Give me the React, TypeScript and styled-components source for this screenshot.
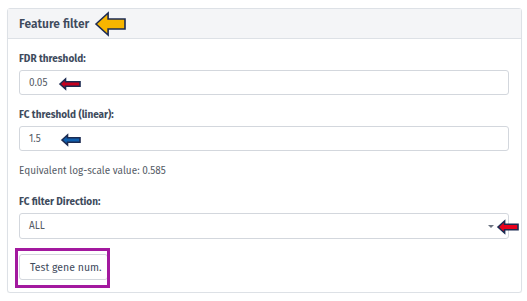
import React from 'react';
import styled, { createGlobalStyle } from 'styled-components';

const GlobalStyle = createGlobalStyle`
  html, body {
    margin: 0;
    padding: 0;
    background: #ffffff;
  }
  body {
    font-family: 'Fira Sans', 'Noto Sans', 'Open Sans', sans-serif;
  }
`;

const Page = styled.div`
  padding: 8px 5px 0 7px;
`;

const Card = styled.div`
  display: flex;
  flex-direction: column;
  background: #fff;
  border: 1px solid #dde1e6;
  border-radius: 3px;
  box-shadow: 0 1px 1px rgba(0, 0, 0, 0.04);
`;

const Header = styled.div`
  position: relative;
  height: 29px;
  display: flex;
  align-items: center;
  gap: 6px;
  padding-left: 11px;
  background: #f4f5f7;
  border-bottom: 1px solid #dde1e6;
  color: #3e4a5c;
  font-size: 12px;
  font-weight: 600;
`;

const Body = styled.div`
  display: flex;
  flex-direction: column;
  align-items: stretch;
  gap: 13px;
  padding: 13px 12px 12px 11px;
`;

const Group = styled.div<{ $extra?: number }>`
  display: flex;
  flex-direction: column;
  gap: 4px;
  margin-top: ${(p) => p.$extra ?? 0}px;
`;

const Label = styled.div`
  line-height: 14px;
  font-size: 10px;
  font-weight: 700;
  color: #3e4a5c;
`;

const Field = styled.div<{ $h?: number }>`
  position: relative;
  height: ${(p) => p.$h ?? 25}px;
  box-sizing: border-box;
  border: 1px solid #d3d7dd;
  border-radius: 3px;
  display: flex;
  align-items: center;
  gap: 10px;
  padding: 0 14px 0 9px;
  font-size: 10px;
  color: #555c66;
  background: #fff;
`;

const Value = styled.span`
  flex: 1;
`;

const Caret = styled.span`
  width: 0;
  height: 0;
  border-left: 3px solid transparent;
  border-right: 3px solid transparent;
  border-top: 3px solid #6b7380;
`;

const Note = styled.div`
  line-height: 14px;
  font-size: 10px;
  color: #555c66;
`;

const ButtonWrap = styled.div`
  position: relative;
  align-self: flex-start;
  display: flex;
  margin-top: 2px;
`;

const Button = styled.button`
  height: 26px;
  width: 89px;
  padding: 0 0 0 10px;
  text-align: left;
  border: 1px solid #d3d7dd;
  border-radius: 3px;
  background: #fff;
  font-family: inherit;
  font-size: 10.5px;
  color: #3e4a5c;
`;

const Highlight = styled.div`
  position: absolute;
  left: -4px;
  top: -6px;
  width: 95px;
  height: 40px;
  box-sizing: border-box;
  border: 3px solid #a3199f;
  pointer-events: none;
`;

const Marker = styled.svg<{ $left: number; $top: number }>`
  position: absolute;
  left: ${(p) => p.$left}px;
  top: ${(p) => p.$top}px;
  overflow: visible;
`;

type ArrowProps = { left: number; top: number; w: number; h: number; fill: string };

// annotation arrow pointing left, laid over the form
const Arrow: React.FC<ArrowProps> = ({ left, top, w, h, fill }) => {
  const head = h * 0.55;
  const s1 = h * 0.27;
  const s2 = h * 0.73;
  return (
    <Marker $left={left} $top={top} width={w} height={h} viewBox={`0 0 ${w} ${h}`}>
      <polygon
        points={`0,${h / 2} ${head},0 ${head},${s1} ${w},${s1} ${w},${s2} ${head},${s2} ${head},${h}`}
        fill={fill}
        stroke="#1c2b52"
        strokeWidth={1.6}
        strokeLinejoin="miter"
      />
    </Marker>
  );
};

export default function App() {
  return (
    <>
      <GlobalStyle />
      <Page>
        <Card>
          <Header>
            Feature filter
            <Arrow left={88} top={4} w={29} h={22} fill="#f7b500" />
          </Header>
          <Body>
            <Group>
              <Label>FDR threshold:</Label>
              <Field>
                <Value>0.05</Value>
                <Arrow left={40} top={8} w={20} h={10} fill="#c4001f" />
              </Field>
            </Group>
            <Group>
              <Label>FC threshold (linear):</Label>
              <Field>
                <Value>1.5</Value>
                <Arrow left={42} top={8} w={18} h={10} fill="#0f5fae" />
              </Field>
            </Group>
            <Note>Equivalent log-scale value: 0.585</Note>
            <Group $extra={4}>
              <Label>FC filter Direction:</Label>
              <Field $h={26}>
                <Value>ALL</Value>
                <Caret />
                <Arrow left={478} top={7} w={20} h={12} fill="#e8001c" />
              </Field>
            </Group>
            <ButtonWrap>
              <Button>Test gene num.</Button>
              <Highlight />
            </ButtonWrap>
          </Body>
        </Card>
      </Page>
    </>
  );
}
